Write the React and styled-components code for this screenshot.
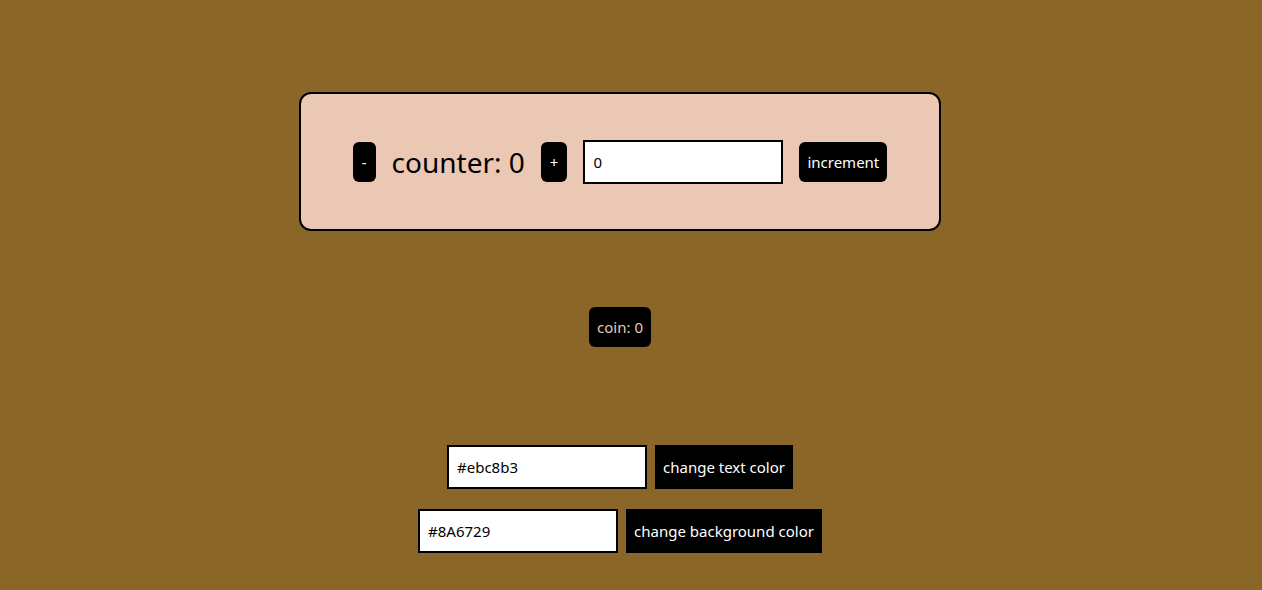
import React, { useState } from 'react'
import styled, { createGlobalStyle } from 'styled-components'

const GlobalStyle = createGlobalStyle`
    html, body {
        margin: 0;
        padding: 0;
        background: ${(p) => p.bg};
        font-family: "Noto Sans", "Open Sans", sans-serif;
    }
`

const App = () => {
    const [count, setCount] = useState(0)
    const [step, setStep] = useState('0')
    const [coin] = useState(0)
    const [textColor, setTextColor] = useState('#ebc8b3')
    const [bgColor, setBgColor] = useState('#8A6729')
    const [text, setText] = useState('#ebc8b3')
    const [bg, setBg] = useState('#8A6729')

    return (
        <StyledApp>
            <GlobalStyle bg={bg} />
            <Card $bg={text}>
                <SmallButton $pad={9} onClick={() => setCount(count - 1)}>-</SmallButton>
                <Counter>counter: {count}</Counter>
                <SmallButton $pad={9} onClick={() => setCount(count + 1)}>+</SmallButton>
                <Field value={step} onChange={(e) => setStep(e.target.value)} />
                <SmallButton onClick={() => setCount(count + Number(step || 0))}>increment</SmallButton>
            </Card>

            <Coin $color={text}>coin: {coin}</Coin>

            <ColorRows>
                <Row>
                    <Field value={textColor} onChange={(e) => setTextColor(e.target.value)} />
                    <FlatButton onClick={() => setText(textColor)}>change text color</FlatButton>
                </Row>
                <Row>
                    <Field value={bgColor} onChange={(e) => setBgColor(e.target.value)} />
                    <FlatButton onClick={() => setBg(bgColor)}>change background color</FlatButton>
                </Row>
            </ColorRows>
        </StyledApp>
    )
}

export default App

const StyledApp = styled.main`
    width: 1240px;
    min-height: 590px;
    padding-top: 92px;
    box-sizing: border-box;
    display: flex;
    flex-direction: column;
    align-items: center;
`

const Card = styled.section`
    width: 642px;
    height: 139px;
    box-sizing: border-box;
    background: ${(p) => p.$bg};
    border: 2px solid #000;
    border-radius: 12px;
    display: flex;
    align-items: center;
    justify-content: center;
    gap: 16px;
`

const SmallButton = styled.button`
    height: 40px;
    padding: 0 ${(p) => p.$pad || 8}px;
    background: #000;
    color: #fff;
    border: none;
    border-radius: 6px;
    font-family: inherit;
    font-size: 15px;
    cursor: pointer;
`

const Counter = styled.span`
    font-size: 28px;
    color: #000;
`

const Field = styled.input`
    width: 200px;
    height: 44px;
    box-sizing: border-box;
    border: 2px solid #000;
    background: #fff;
    padding: 0 8px;
    font-family: inherit;
    font-size: 15px;
    color: #000;
    outline: none;
`

const Coin = styled.button`
    margin-top: 76px;
    height: 40px;
    padding: 0 8px;
    background: #000;
    color: ${(p) => p.$color};
    border: none;
    border-radius: 6px;
    font-family: inherit;
    font-size: 15px;
`

const ColorRows = styled.div`
    margin-top: 98px;
    display: flex;
    flex-direction: column;
    align-items: center;
    gap: 20px;
`

const Row = styled.div`
    display: flex;
    gap: 8px;
`

const FlatButton = styled.button`
    height: 44px;
    padding: 0 8px;
    background: #000;
    color: #fff;
    border: none;
    border-radius: 0;
    font-family: inherit;
    font-size: 15px;
    cursor: pointer;
`
